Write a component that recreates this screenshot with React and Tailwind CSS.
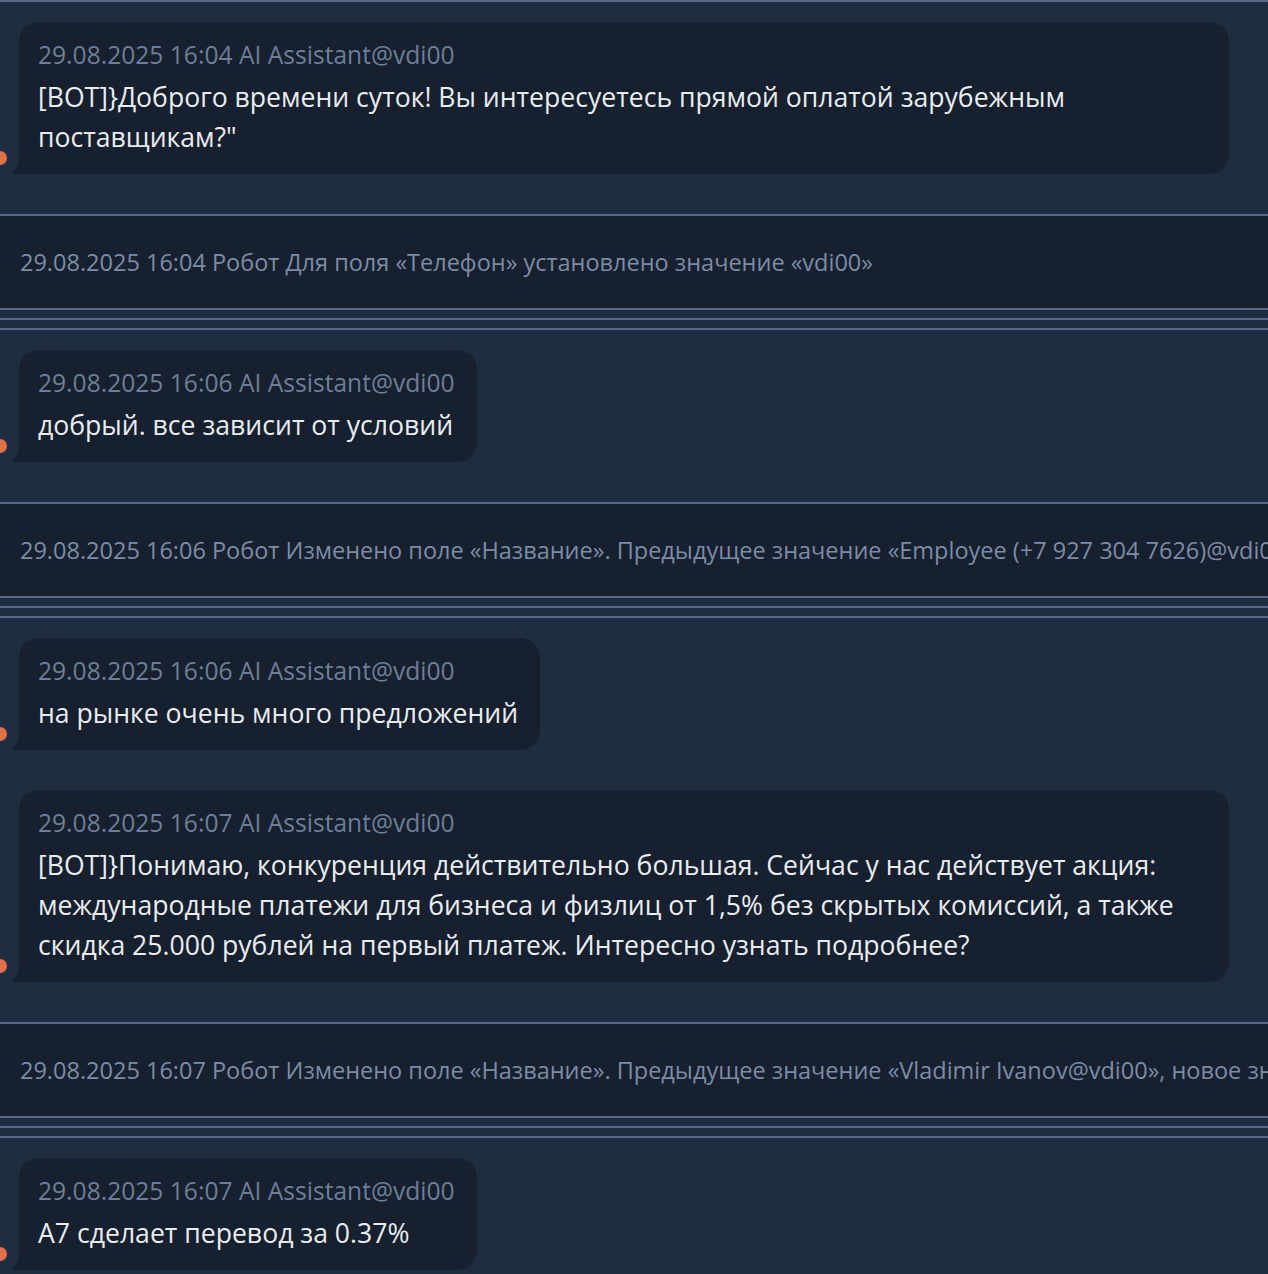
import React from "react";

const FONT = { fontFamily: '"Open Sans", "Noto Sans", sans-serif' };

function Bubble({ time, lines, full }) {
  return (
    <div className="relative flex pl-[19px]">
      <div className="absolute left-[-7px] bottom-[9px] h-[14px] w-[14px] rounded-full bg-[#e4704a]" />
      <div
        className={
          "relative rounded-[20px] rounded-bl-[4px] bg-[#16202e] pl-[19px] pr-[22px] pt-[18px] pb-[17px] " +
          (full ? "w-[1210px]" : "")
        }
      >
        <svg
          className="absolute left-[-8px] bottom-0"
          width="12"
          height="18"
          viewBox="0 0 12 18"
        >
          <path d="M8 0 C8 9 5 14 0 18 L12 18 L12 0 Z" fill="#16202e" />
        </svg>
        <div className="text-[24.6px] leading-[30px] text-[#6e7e98] whitespace-nowrap">
          {time} AI Assistant@vdi00
        </div>
        <div className="mt-[7px] text-[26.6px] leading-[40px] text-[#e9edf1]">
          {lines.map((l, i) => (
            <div key={i} className="whitespace-nowrap">
              {l}
            </div>
          ))}
        </div>
      </div>
    </div>
  );
}

function Robot({ text }) {
  return (
    <div>
      <div className="h-[2px] bg-[#5a6985]" />
      <div className="flex h-[92px] items-center overflow-hidden bg-[#16202e] pl-[20px]">
        <span className="whitespace-nowrap text-[23.5px] leading-[30px] text-[#7d8ca6]">
          {text}
        </span>
      </div>
      <div className="h-[2px] bg-[#5a6985]" />
      <div className="h-[8px]" />
      <div className="h-[2px] bg-[#5a6985]" />
      <div className="h-[8px]" />
      <div className="h-[2px] bg-[#5a6985]" />
    </div>
  );
}

function Group({ children }) {
  return <div className="flex flex-col gap-[40px] pt-[20px] pb-[40px]">{children}</div>;
}

export default function App() {
  return (
    <div
      className="h-[1274px] w-[1268px] overflow-hidden bg-[#1e2d3f]"
      style={FONT}
    >
      <div className="h-[2px] bg-[#5a6985]" />
      <Group>
        <Bubble
          full
          time="29.08.2025 16:04"
          lines={[
            "[BOT]}Доброго времени суток! Вы интересуетесь прямой оплатой зарубежным",
            "поставщикам?\"",
          ]}
        />
      </Group>
      <Robot text="29.08.2025 16:04 Робот Для поля «Телефон» установлено значение «vdi00»" />
      <Group>
        <Bubble time="29.08.2025 16:06" lines={["добрый. все зависит от условий"]} />
      </Group>
      <Robot text="29.08.2025 16:06 Робот Изменено поле «Название». Предыдущее значение «Employee (+7 927 304 7626)@vdi00», новое значение «Vladimir Ivanov@vdi00»" />
      <Group>
        <Bubble time="29.08.2025 16:06" lines={["на рынке очень много предложений"]} />
        <Bubble
          full
          time="29.08.2025 16:07"
          lines={[
            "[BOT]}Понимаю, конкуренция действительно большая. Сейчас у нас действует акция:",
            "международные платежи для бизнеса и физлиц от 1,5% без скрытых комиссий, а также",
            "скидка 25.000 рублей на первый платеж. Интересно узнать подробнее?",
          ]}
        />
      </Group>
      <Robot text="29.08.2025 16:07 Робот Изменено поле «Название». Предыдущее значение «Vladimir Ivanov@vdi00», новое значение «A7 Agent@vdi00»" />
      <Group>
        <Bubble time="29.08.2025 16:07" lines={["А7 сделает перевод за 0.37%"]} />
      </Group>
    </div>
  );
}
